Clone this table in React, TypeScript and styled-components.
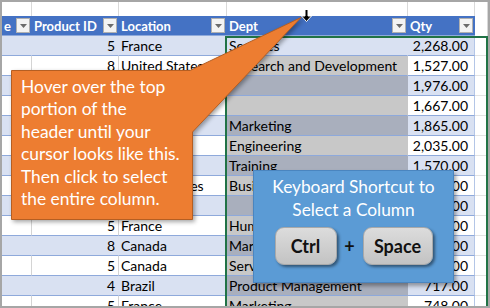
import styled, { createGlobalStyle } from "styled-components";

const GlobalStyle = createGlobalStyle`
  html, body {
    margin: 0;
    padding: 0;
    background: #fff;
  }
  body {
    font-family: Lato, "Open Sans", sans-serif;
  }
`;

interface Row {
  id: string;
  loc: string;
  dept: string;
  qty: string;
}

const rows: Row[] = [
  { id: "5", loc: "France", dept: "Services", qty: "2,268.00" },
  { id: "8", loc: "United States", dept: "Research and Development", qty: "1,527.00" },
  { id: "4", loc: "Brazil", dept: "", qty: "1,976.00" },
  { id: "5", loc: "France", dept: "", qty: "1,667.00" },
  { id: "8", loc: "Canada", dept: "Marketing", qty: "1,865.00" },
  { id: "4", loc: "Brazil", dept: "Engineering", qty: "2,035.00" },
  { id: "5", loc: "France", dept: "Training", qty: "1,570.00" },
  { id: "8", loc: "United States", dept: "Business Development", qty: "1,342.00" },
  { id: "4", loc: "Brazil", dept: "", qty: "1,118.00" },
  { id: "5", loc: "France", dept: "Human Resources", qty: "1,224.00" },
  { id: "8", loc: "Canada", dept: "Marketing", qty: "1,096.00" },
  { id: "5", loc: "Canada", dept: "Services", qty: "1,403.00" },
  { id: "4", loc: "Brazil", dept: "Product Management", qty: "717.00" },
  { id: "5", loc: "France", dept: "Marketing", qty: "748.00" },
];

const headers = ["e", "Product ID", "Location", "Dept", "Qty"];

const App = () => {
  return (
    <>
      <GlobalStyle />
      <Frame>
        <Sheet>
          {headers.map((h) => (
            <TopCell key={`top-${h}`} />
          ))}
          <TopCell />

          {headers.map((h) => (
            <HeaderCell key={h}>
              <span>{h}</span>
              <FilterButton>
                <svg width="7" height="4" viewBox="0 0 7 4">
                  <path d="M0 0 H7 L3.5 4 Z" fill="#6b6b6b" />
                </svg>
              </FilterButton>
            </HeaderCell>
          ))}
          <TopCell />

          {rows.map((r, i) => {
            const band = i % 2 === 0;
            return [
              <Cell key={`a${i}`} $band={band} />,
              <Cell key={`b${i}`} $band={band} $align="right">
                {r.id}
              </Cell>,
              <Cell key={`c${i}`} $band={band}>
                {r.loc}
              </Cell>,
              <Cell key={`d${i}`} $band={band} $sel={i > 0}>
                {r.dept}
              </Cell>,
              <QtyCell key={`e${i}`} $band={band} $align="right">
                {r.qty}
              </QtyCell>,
              <BlankCell key={`f${i}`} />,
            ];
          })}

          <SelectionFrame />
        </Sheet>

        <Cursor width="12" height="15" viewBox="0 0 12 15">
          <path
            d="M4 0.5 H7 V7 H10.5 L5.5 12.5 L0.5 7 H4 Z"
            fill="#000"
            stroke="#fff"
            strokeWidth="1"
          />
        </Cursor>

        <HoverCallout>
          <CalloutShape width="294" height="206" viewBox="0 0 294 206">
            <path
              d="M0.5 53.5 H179 L290 0.5 L181.5 115 V202.5 H0.5 Z"
              fill="#ED7D31"
              stroke="#B55E22"
              strokeWidth="1"
            />
          </CalloutShape>
          <CalloutText>
            Hover over the top
            <br />
            portion of the
            <br />
            header until your
            <br />
            cursor looks like this.
            <br />
            Then click to select
            <br />
            the entire column.
          </CalloutText>
        </HoverCallout>

        <ShortcutBox>
          <ShortcutTitle>
            Keyboard Shortcut to
            <br />
            Select a Column
          </ShortcutTitle>
          <KeyRow>
            <Key $width={62}>Ctrl</Key>
            <Plus>+</Plus>
            <Key $width={70}>Space</Key>
          </KeyRow>
        </ShortcutBox>
      </Frame>
    </>
  );
};

export default App;

const Frame = styled.div`
  position: relative;
  width: 490px;
  height: 308px;
  box-sizing: border-box;
  border: 2px solid #a6a6a6;
  overflow: hidden;
  background: #fff;
`;

const Sheet = styled.div`
  position: relative;
  display: grid;
  grid-template-columns: 30px 87px 108px 181px 67px 1fr;
  grid-template-rows: 14px 20px repeat(14, 20px);
  font-size: 14px;
  color: #000;
`;

const TopCell = styled.div`
  box-sizing: border-box;
  background: #fff;
  border-right: 1px solid #d9d9d9;
`;

const HeaderCell = styled.div`
  box-sizing: border-box;
  display: flex;
  align-items: center;
  justify-content: space-between;
  padding: 0 2px;
  background: #4472c4;
  border-bottom: 1px solid #8ea9db;
  color: #fff;
  font-weight: 700;
  font-size: 13px;
  white-space: nowrap;
  overflow: hidden;
`;

const FilterButton = styled.div`
  box-sizing: border-box;
  display: flex;
  align-items: center;
  justify-content: center;
  width: 14px;
  height: 15px;
  background: #f3f3f3;
  border: 1px solid #b0b0b0;
`;

const Cell = styled.div<{ $band?: boolean; $sel?: boolean; $align?: "left" | "right" }>`
  box-sizing: border-box;
  display: flex;
  align-items: center;
  justify-content: ${(p) => (p.$align === "right" ? "flex-end" : "flex-start")};
  padding: 0 ${(p) => (p.$align === "right" ? "3px" : "2px")} 0 2px;
  background: ${(p) =>
    p.$sel ? (p.$band ? "#a9afbd" : "#c8c8c8") : p.$band ? "#d9e1f2" : "#fff"};
  border-bottom: 1px solid #8ea9db;
  border-right: 1px solid
    ${(p) => (p.$sel ? "transparent" : p.$band ? "#d9e1f2" : "#d4d4d4")};
  white-space: nowrap;
  overflow: hidden;
`;

const QtyCell = styled(Cell)`
  padding-right: 6px;
  border-right-color: #b4c6e7;
`;

const BlankCell = styled.div`
  box-sizing: border-box;
  background: #fff;
  border-bottom: 1px solid #e3e3e3;
`;

const SelectionFrame = styled.div`
  position: absolute;
  grid-column: 4;
  grid-row: 3 / -1;
  top: 0;
  bottom: 0;
  left: -2px;
  right: 0;
  border: 2px solid #217346;
  pointer-events: none;
`;

const Cursor = styled.svg`
  position: absolute;
  left: 299px;
  top: 7px;
`;

const HoverCallout = styled.div`
  position: absolute;
  left: 9px;
  top: 15px;
  width: 294px;
  height: 206px;
`;

const CalloutShape = styled.svg`
  position: absolute;
  inset: 0;
  overflow: visible;
  filter: drop-shadow(2px 2px 2px rgba(0, 0, 0, 0.35));
`;

const CalloutText = styled.p`
  position: relative;
  margin: 0;
  padding: 59px 0 0 10px;
  color: #fff;
  font-size: 17.4px;
  line-height: 22.4px;
  white-space: nowrap;
`;

const ShortcutBox = styled.div`
  position: absolute;
  left: 251px;
  top: 168px;
  width: 201px;
  height: 113px;
  box-sizing: border-box;
  display: flex;
  flex-direction: column;
  align-items: center;
  padding-top: 4px;
  background: #5b9bd5;
  border: 1px solid #4a85bf;
  box-shadow: 2px 3px 4px rgba(0, 0, 0, 0.35);
`;

const ShortcutTitle = styled.p`
  margin: 0;
  color: #fff;
  font-size: 17.3px;
  line-height: 23px;
  text-align: center;
`;

const KeyRow = styled.div`
  display: flex;
  align-items: center;
  margin-top: 6px;
`;

const Key = styled.div<{ $width: number }>`
  box-sizing: border-box;
  display: flex;
  align-items: center;
  justify-content: center;
  width: ${(p) => p.$width}px;
  height: 38px;
  border-radius: 9px;
  border: 1px solid #a9a9a9;
  background: linear-gradient(#dcdcdc, #c3c3c3);
  box-shadow: 2px 2px 3px rgba(0, 0, 0, 0.45);
  color: #111;
  font-size: 18px;
  font-weight: 700;
`;

const Plus = styled.span`
  width: 26px;
  text-align: center;
  color: #111;
  font-size: 18px;
  font-weight: 700;
`;
